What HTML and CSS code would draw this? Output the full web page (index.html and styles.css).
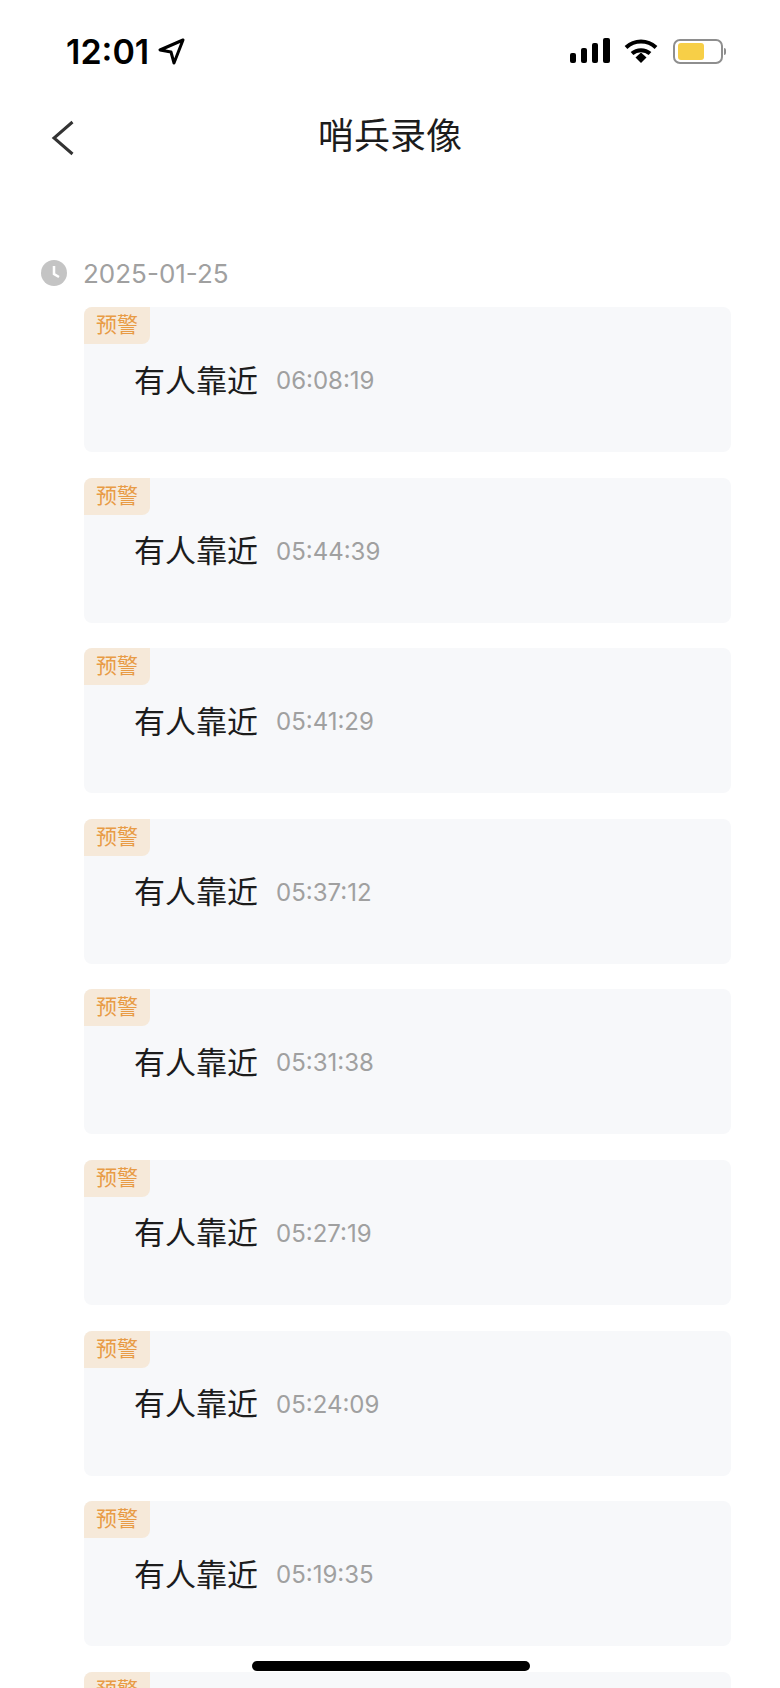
FILE: index.html
```html
<!DOCTYPE html>
<html lang="zh-CN">
<head>
    <meta charset="UTF-8">
    <meta name="viewport" content="width=device-width, initial-scale=1.0">
    <title>哨兵录像</title>
    <link rel="stylesheet" href="styles.css">
</head>
<body>
    <div class="phone">
        <div class="statusbar">
            <div class="clock">
                <span>12:01</span>
                <svg class="arrow" width="27" height="27" viewBox="0 0 27 27"><path d="M25 2 L2 12 L13 14 L16 25 Z" fill="none" stroke="#000" stroke-width="3" stroke-linejoin="round"/></svg>
            </div>
            <div class="status-icons">
                <svg width="40" height="26" viewBox="0 0 40 26"><rect x="0" y="15" width="6" height="10" rx="2"/><rect x="11" y="10" width="6" height="15" rx="2"/><rect x="22" y="5" width="6" height="20" rx="2"/><rect x="33" y="0" width="7" height="25" rx="2"/></svg>
                <svg class="wifi" width="34" height="26" viewBox="0 0 34 26"><path d="M2 9.500 C10.500 1.500 23.500 1.500 32 9.500" fill="none" stroke="#000" stroke-width="4"/><path d="M8 15.500 C13 11 21 11 26 15.500" fill="none" stroke="#000" stroke-width="4"/><path d="M11.500 19.500 L17 14.500 L22.500 19.500 L17 25 Z"/></svg>
                <div class="battery"><div class="battery-fill"></div></div>
                <div class="battery-tip"></div>
            </div>
        </div>

        <div class="navbar">
            <svg class="back" width="24" height="36" viewBox="0 0 24 36"><path d="M21.500 2 L3 18 L21.500 34" fill="none" stroke="#333" stroke-width="3"/></svg>
            <h1>哨兵录像</h1>
        </div>

        <div class="date-row">
            <svg width="26" height="26" viewBox="0 0 26 26"><circle cx="13" cy="13" r="13" fill="#c4c4c4"/><path d="M13 6 V14 L18 17" fill="none" stroke="#fff" stroke-width="2.500"/></svg>
            <span>2025-01-25</span>
        </div>

        <div class="list">
            <div class="card"><div class="tag">预警</div><div class="row"><span class="name">有人靠近</span><span class="time">06:08:19</span></div></div>
            <div class="card"><div class="tag">预警</div><div class="row"><span class="name">有人靠近</span><span class="time">05:44:39</span></div></div>
            <div class="card"><div class="tag">预警</div><div class="row"><span class="name">有人靠近</span><span class="time">05:41:29</span></div></div>
            <div class="card"><div class="tag">预警</div><div class="row"><span class="name">有人靠近</span><span class="time">05:37:12</span></div></div>
            <div class="card"><div class="tag">预警</div><div class="row"><span class="name">有人靠近</span><span class="time">05:31:38</span></div></div>
            <div class="card"><div class="tag">预警</div><div class="row"><span class="name">有人靠近</span><span class="time">05:27:19</span></div></div>
            <div class="card"><div class="tag">预警</div><div class="row"><span class="name">有人靠近</span><span class="time">05:24:09</span></div></div>
            <div class="card"><div class="tag">预警</div><div class="row"><span class="name">有人靠近</span><span class="time">05:19:35</span></div></div>
            <div class="card"><div class="tag">预警</div></div>
        </div>

        <div class="home-bar"></div>
    </div>
</body>
</html>
```

FILE: styles.css
```css
html, body {
    margin: 0;
    padding: 0;
    background-color: #fff;
}
.phone {
    position: relative;
    width: 780px;
    height: 1688px;
    overflow: hidden;
    background-color: #fff;
    font-family: Inter, "Noto Sans CJK SC", sans-serif;
    color: #1c1c1c;
}

.statusbar {
    height: 104px;
    box-sizing: border-box;
    padding: 29px 54px 0 66px;
    display: flex;
    justify-content: space-between;
    align-items: flex-start;
}
.clock {
    display: flex;
    align-items: center;
    gap: 9px;
    height: 44px;
    font-size: 34px;
    font-weight: 600;
    color: #000;
}
.status-icons {
    display: flex;
    align-items: center;
    height: 44px;
}
.wifi {
    margin-left: 14px;
}
.battery {
    margin-left: 15px;
    width: 50px;
    height: 25px;
    box-sizing: border-box;
    padding: 2px 3px;
    border: 2px solid #8e8e8e;
    border-radius: 7px;
}
.battery-fill {
    width: 26px;
    height: 100%;
    background-color: #f7cf47;
    border-radius: 3px;
}
.battery-tip {
    width: 2px;
    height: 7px;
    margin-left: 1px;
    background-color: #8e8e8e;
    border-radius: 0 2px 2px 0;
}

.navbar {
    position: relative;
    height: 58px;
    display: flex;
    align-items: center;
    justify-content: center;
}
.navbar h1 {
    margin: 0;
    font-size: 36px;
    font-weight: 400;
    font-family: "Noto Sans CJK SC", sans-serif;
}
.back {
    position: absolute;
    left: 51px;
    top: 16px;
}

.date-row {
    margin-top: 97px;
    padding-left: 41px;
    height: 28px;
    display: flex;
    align-items: center;
    gap: 16px;
    font-size: 26px;
    color: #a0a0a0;
}

.list {
    margin: 20px 49px 0 84px;
    display: flex;
    flex-direction: column;
    gap: 25.600px;
}
.card {
    height: 145px;
    flex-shrink: 0;
    background-color: #f7f8fa;
    border-radius: 8px;
}
.tag {
    width: 66px;
    height: 37px;
    background-color: #f6e9d9;
    border-radius: 8px 0 8px 0;
    color: #e89b45;
    font-size: 21px;
    line-height: 33px;
    text-align: center;
    font-family: "Noto Sans CJK SC", sans-serif;
}
.row {
    margin-top: 12px;
    padding-left: 50px;
    display: flex;
    align-items: center;
    gap: 18px;
    height: 44px;
}
.name {
    font-size: 31px;
    font-family: "Noto Sans CJK SC", sans-serif;
    color: #1c1c1c;
}
.time {
    font-size: 24px;
    margin-top: 5px;
    color: #a0a0a0;
}

.home-bar {
    position: absolute;
    left: 252px;
    top: 1661px;
    width: 278px;
    height: 10px;
    background-color: #000;
    border-radius: 5px;
}
```
